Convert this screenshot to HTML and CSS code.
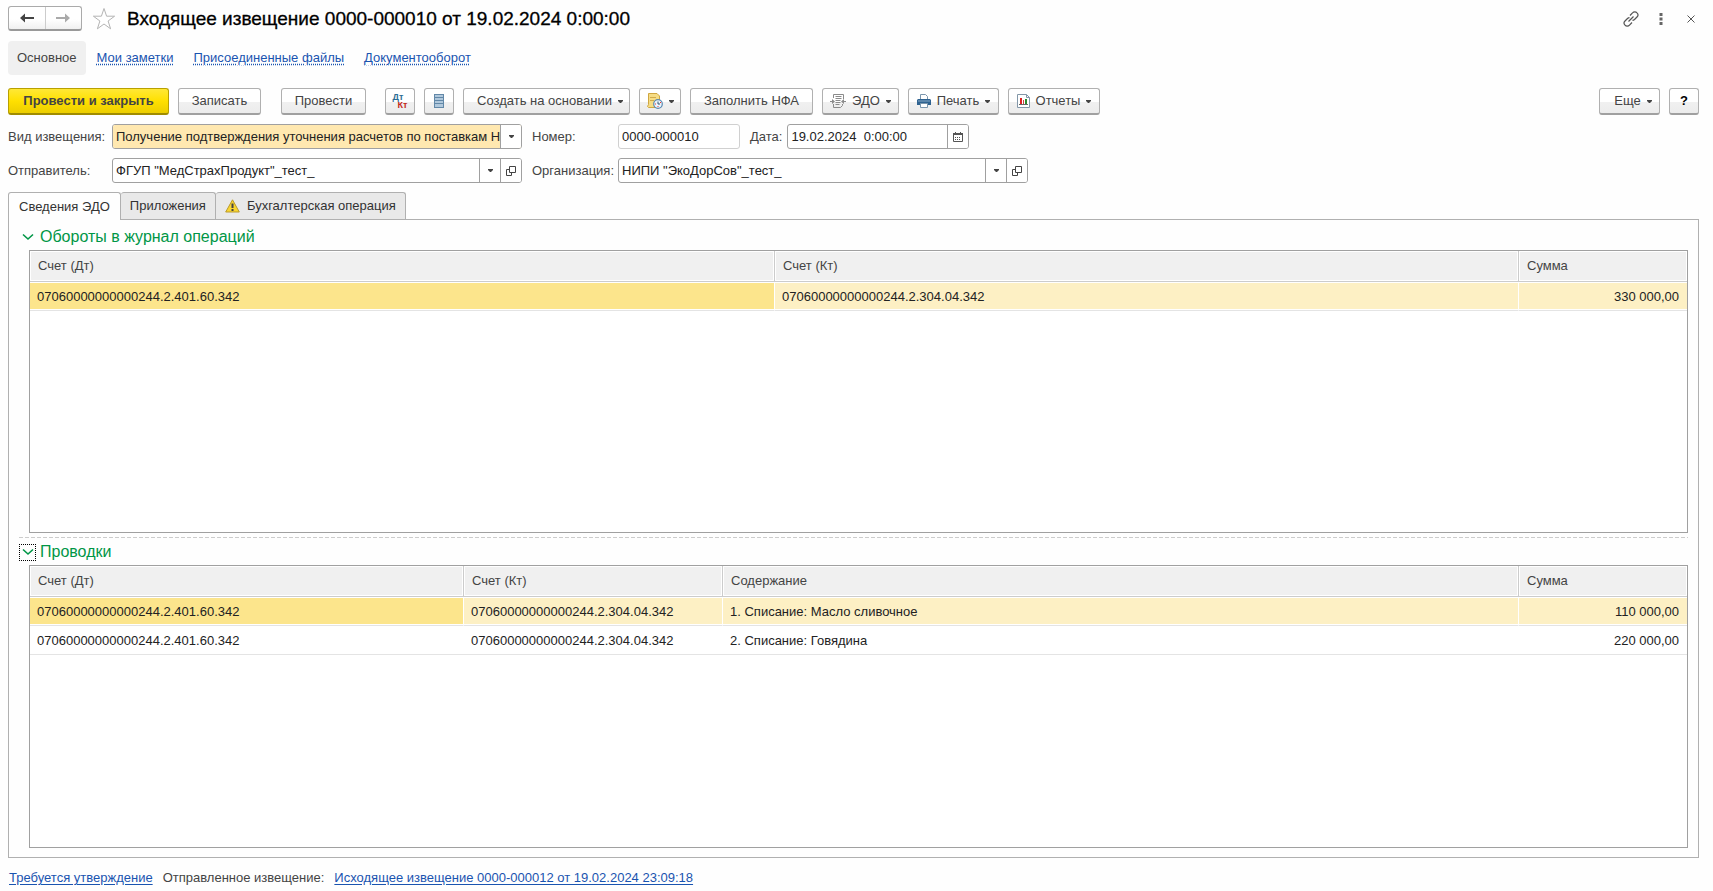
FILE: index.html
```html
<!DOCTYPE html>
<html lang="ru">
<head>
<meta charset="utf-8">
<title>Входящее извещение 0000-000010 от 19.02.2024 0:00:00</title>
<link rel="stylesheet" href="styles.css">
</head>
<body>
<svg class="defs" aria-hidden="true">
  <symbol id="caret" viewBox="0 0 5 3"><path d="M0 0h5v1L3 3H2L0 1z" fill="currentColor"/></symbol>
  <symbol id="open" viewBox="0 0 10 10"><path d="M3.500.5h6v6h-6zM3 3.500H.5v6h5V7" fill="none" stroke="currentColor"/></symbol>
  <symbol id="chevron" viewBox="0 0 12 8"><path d="M1 1.500l5 4.500 5-4.500" fill="none" stroke="currentColor" stroke-width="1.600"/></symbol>
</svg>

<header class="titlebar">
  <div class="history">
    <button class="history-btn" aria-label="Назад"><svg width="14" height="10" viewBox="0 0 14 10"><path d="M0 5l5-4.500V4h9v2H5v3.500z" fill="#444"/></svg></button>
    <button class="history-btn" aria-label="Вперед"><svg width="14" height="10" viewBox="0 0 14 10"><path d="M14 5L9 .5V4H0v2h9v3.500z" fill="#aaa"/></svg></button>
  </div>
  <button class="plain" aria-label="В избранное"><svg width="24" height="24" viewBox="0 0 24 24"><path d="M12 1.500l2.600 7.700h8l-6.500 4.800 2.500 7.800-6.600-4.800-6.600 4.800L7.900 14 1.400 9.200h8z" fill="#fff" stroke="#b4b4b4"/></svg></button>
  <h1 class="title">Входящее извещение 0000-000010 от 19.02.2024 0:00:00</h1>
  <div class="window-actions">
    <button class="plain" aria-label="Ссылка"><svg width="16" height="16" viewBox="0 0 16 16" fill="none" stroke="#555" stroke-width="1.200"><path d="M7 4.500l2.500-2.700a3 3 0 0 1 4.500 0 3 3 0 0 1 0 4.200l-2.500 2.500a3 3 0 0 1-2 .8M9 11.500l-2.500 2.700a3 3 0 0 1-4.500 0 3 3 0 0 1 0-4.200l2.500-2.500a3 3 0 0 1 2-.8M5.500 10.500l5-5"/></svg></button>
    <button class="plain" aria-label="Меню"><svg width="4" height="12" viewBox="0 0 4 12"><path d="M.5 0h3v3h-3zM.5 4.500h3v3h-3zM.5 9h3v3h-3z" fill="#666"/></svg></button>
    <button class="plain" aria-label="Закрыть"><svg width="8" height="8" viewBox="0 0 8 8"><path d="M.5.5l7 7m0-7l-7 7" stroke="#555"/></svg></button>
  </div>
</header>

<nav class="sections">
  <span class="section-current">Основное</span>
  <a class="section-link" href="#">Мои заметки</a>
  <a class="section-link" href="#">Присоединенные файлы</a>
  <a class="section-link" href="#">Документооборот</a>
</nav>

<div class="toolbar">
  <button class="btn btn-primary">Провести и закрыть</button>
  <button class="btn btn-write">Записать</button>
  <button class="btn btn-post">Провести</button>
  <button class="btn btn-icon btn-dtkt" aria-label="Дт Кт"><span class="dtkt"><span class="dt">Дт</span><span class="kt">Кт</span></span></button>
  <button class="btn btn-icon" aria-label="Реестр"><svg width="10" height="14" viewBox="0 0 10 14"><path d="M0 0h10v14H0z" fill="#6288a8"/><path d="M1 1h8v2H1zM1 4h8v2H1zM1 7h8v2H1zM1 10h8v3H1z" fill="#b0c8dc"/></svg></button>
  <button class="btn btn-create">Создать на основании<svg class="caret"><use href="#caret"/></svg></button>
  <button class="btn btn-task" aria-label="Задачи"><svg width="16" height="16" viewBox="0 0 16 16"><path d="M1.500.5H10l2.500 2.500v11.500h-11l-1-1 1-2z" fill="#f5dc85" stroke="#cfa640"/><path d="M3 4.500h6M3 7.500h4" stroke="#d2ab4a"/><circle cx="11" cy="11" r="4.300" fill="#eaf4fb" stroke="#5b88b0" stroke-width="1.200"/><path d="M11 8.500V11h2" fill="none" stroke="#357"/><path d="M8 10.500h1v1H8zM10.500 13h1v1h-1zM13 9h1v1h-1z" fill="#e33"/></svg><svg class="caret"><use href="#caret"/></svg></button>
  <button class="btn btn-fill">Заполнить НФА</button>
  <button class="btn btn-edo"><svg width="16" height="14" viewBox="0 0 16 14"><path d="M3.500 4V.5h10V5M3.500 10v3.500h7l2-2V10M5.500 2.500h6M5.500 4.500h6M5.500 6.500h5M5.500 8.500h5M5.500 10.500h4" fill="none" stroke="#8b8b8b"/><path d="M0 7h2V5l3 2.500L2 10V8H0zM16 7h-2V5l-3 2.500 3 2.500V8h2z" fill="#8b8b8b"/></svg><span>ЭДО</span><svg class="caret"><use href="#caret"/></svg></button>
  <button class="btn btn-print"><svg width="14" height="14" viewBox="0 0 14 14"><path d="M3.500 6V.5h5l2 2V6" fill="#fff" stroke="#7b96ad"/><path d="M1 5h12l1 1v5H0V6z" fill="#2f6391"/><path d="M1 7h12" stroke="#88aac6"/><path d="M3.500 9.500h7v4h-7z" fill="#fff" stroke="#7b96ad"/></svg><span>Печать</span><svg class="caret"><use href="#caret"/></svg></button>
  <button class="btn btn-reports"><svg width="13" height="14" viewBox="0 0 13 14"><path d="M.5.5h9l3 3v10H.5z" fill="#fff" stroke="#8297a8"/><path d="M9.500.5v3h3" fill="none" stroke="#8297a8"/><path d="M3 4h2v6H3z" fill="#d22"/><path d="M6 6h1v4H6z" fill="#c44"/><path d="M8 5h2v5H8z" fill="#2a8a2a"/><path d="M2 10.500h9" stroke="#666"/></svg><span>Отчеты</span><svg class="caret"><use href="#caret"/></svg></button>
  <button class="btn btn-more">Еще<svg class="caret"><use href="#caret"/></svg></button>
  <button class="btn btn-icon btn-help">?</button>
</div>

<form class="form">
  <label class="label" for="kind">Вид извещения:</label>
  <div class="field field-required">
    <select class="control" id="kind"><option>Получение подтверждения уточнения расчетов по поставкам Н</option></select>
    <span class="drop"><svg class="caret"><use href="#caret"/></svg></span>
  </div>
  <label class="label" for="number">Номер:</label>
  <div class="row">
    <div class="field field-number"><input class="control" id="number" value="0000-000010" readonly></div>
    <label class="label" for="date">Дата:</label>
    <div class="field field-date">
      <input class="control" id="date" value="19.02.2024  0:00:00">
      <button type="button" class="field-btn" aria-label="Календарь"><svg width="10" height="10" viewBox="0 0 10 10"><path d="M.5 2.500h9v7h-9z" fill="#fff" stroke="#555"/><path d="M0 1h10v2H0zM2 0h1v1H2zM7 0h1v1H7z" fill="#555"/><path d="M2 5.500h6M2 7.500h6" stroke="#555" stroke-dasharray="1 1"/></svg></button>
    </div>
  </div>
  <label class="label" for="sender">Отправитель:</label>
  <div class="field">
    <select class="control" id="sender"><option>ФГУП "МедСтрахПродукт"_тест_</option></select>
    <span class="drop drop-inner"><svg class="caret"><use href="#caret"/></svg></span>
    <button type="button" class="field-btn" aria-label="Открыть отправителя"><svg width="10" height="10"><use href="#open"/></svg></button>
  </div>
  <label class="label" for="org">Организация:</label>
  <div class="field">
    <select class="control" id="org"><option>НИПИ "ЭкоДорСов"_тест_</option></select>
    <span class="drop drop-inner"><svg class="caret"><use href="#caret"/></svg></span>
    <button type="button" class="field-btn" aria-label="Открыть организацию"><svg width="10" height="10"><use href="#open"/></svg></button>
  </div>
</form>

<div class="tabs" role="tablist">
  <button class="tab tab-active" role="tab" aria-selected="true">Сведения ЭДО</button>
  <button class="tab" role="tab" aria-selected="false">Приложения</button>
  <button class="tab" role="tab" aria-selected="false"><svg width="15" height="14" viewBox="0 0 15 14"><path d="M7.500.8L14.300 13H.7z" fill="#f9d531" stroke="#b99a2c" stroke-linejoin="round"/><path d="M6.500 4.500h2V9h-2zM6.500 10h2v2h-2z" fill="#444"/></svg>Бухгалтерская операция</button>
</div>

<main class="panel">
  <section class="group">
    <h2 class="group-title"><button class="toggle" aria-label="Свернуть"><svg width="12" height="8"><use href="#chevron"/></svg></button>Обороты в журнал операций</h2>
    <div class="grid">
      <table class="table">
        <colgroup><col class="col-half"><col><col class="col-sum"></colgroup>
        <thead><tr><th>Счет (Дт)</th><th>Счет (Кт)</th><th>Сумма</th></tr></thead>
        <tbody>
          <tr class="selected"><td class="active">07060000000000244.2.401.60.342</td><td>07060000000000244.2.304.04.342</td><td class="num">330 000,00</td></tr>
        </tbody>
      </table>
    </div>
  </section>
  <div class="splitter"></div>
  <section class="group">
    <h2 class="group-title"><button class="toggle toggle-focused" aria-label="Свернуть"><svg width="12" height="8"><use href="#chevron"/></svg></button>Проводки</h2>
    <div class="grid">
      <table class="table">
        <colgroup><col class="col-debit"><col class="col-credit"><col><col class="col-sum"></colgroup>
        <thead><tr><th>Счет (Дт)</th><th>Счет (Кт)</th><th>Содержание</th><th>Сумма</th></tr></thead>
        <tbody>
          <tr class="selected"><td class="active">07060000000000244.2.401.60.342</td><td>07060000000000244.2.304.04.342</td><td>1. Списание: Масло сливочное</td><td class="num">110 000,00</td></tr>
          <tr><td>07060000000000244.2.401.60.342</td><td>07060000000000244.2.304.04.342</td><td>2. Списание: Говядина</td><td class="num">220 000,00</td></tr>
        </tbody>
      </table>
    </div>
  </section>
</main>

<footer class="footer">
  <a href="#">Требуется утверждение</a>
  <span>Отправленное извещение:</span>
  <a href="#">Исходящее извещение 0000-000012 от 19.02.2024 23:09:18</a>
</footer>
</body>
</html>
```
FILE: styles.css
```css
* { box-sizing: border-box; }

body {
  margin: 0;
  height: 100vh;
  min-height: 600px;
  padding: 6px 14px 0 8px;
  display: flex;
  flex-direction: column;
  background: #fefefe;
  color: #444;
  font: 13px/16px "Liberation Sans", Arial, sans-serif;
}

button, input, select { font: inherit; color: inherit; margin: 0; }
svg { flex: none; }
.defs { position: absolute; width: 0; height: 0; }
.caret { width: 5px; height: 3px; color: #444; }

.plain { padding: 0; border: 0; background: none; display: flex; justify-content: center; }

/* Title bar */
.titlebar { display: flex; align-items: center; height: 25px; }
.history {
  display: flex;
  width: 74px;
  height: 25px;
  margin-right: 10px;
  border: 1px solid #aaa;
  border-bottom: 2px solid #999;
  border-radius: 3px;
  background: linear-gradient(#fff 55%, #f0f0f0);
}
.history-btn {
  flex: 1;
  display: flex;
  align-items: center;
  justify-content: center;
  padding: 0;
  border: 0;
  background: none;
}
.history-btn + .history-btn { border-left: 1px solid #ccc; }
.title { margin: 0 0 0 11px; font-size: 19px; font-weight: 400; line-height: 22px; color: #000; -webkit-text-stroke: 0.3px #000; }
.window-actions { display: flex; align-items: center; gap: 14px; margin-left: auto; }
.window-actions .plain { width: 16px; }

/* Section links */
.sections { display: flex; align-items: center; gap: 20px; margin-top: 10px; height: 34px; }
.section-current { padding: 9px; margin-right: -9px; border-radius: 4px; background: #f0f0f0; }
.section-link {
  color: #1a54b0;
  text-decoration: underline dotted;
  text-underline-offset: 2px;
}

/* Command bar */
.toolbar { display: flex; gap: 9px; margin-top: 13px; }
.btn {
  display: flex;
  align-items: center;
  justify-content: center;
  gap: 6px;
  height: 27px;
  padding: 0;
  border: 1px solid #b0b0b0;
  border-bottom: 2px solid #a0a0a0;
  border-radius: 3px;
  background: linear-gradient(#fff 55%, #f0f0f0 56%, #ececec);
  white-space: nowrap;
}
.btn-primary {
  width: 161px;
  border-color: #b8a000 #b8a000 #a08c00;
  background: linear-gradient(#ffe836, #ffe000 50%, #ecce00);
  font-weight: 700;
}
.btn-icon { width: 30px; }
.btn-write { width: 83px; }
.btn-post { width: 85px; margin-left: 11px; }
.btn-dtkt { margin-left: 10px; }
.btn-create { width: 167px; padding-left: 7px; }
.btn-task { width: 42px; }
.btn-fill { width: 123px; }
.btn-edo { width: 77px; }
.btn-print { width: 91px; }
.btn-reports { width: 92px; }
.btn-more { width: 61px; margin-left: auto; padding-left: 7px; }
.btn-help { color: #000; font-weight: 700; }
.dtkt { display: grid; width: 15px; font-size: 9px; line-height: 8px; font-weight: 700; }
.dt { color: #2c6c94; text-align: left; }
.kt { color: #c4281c; text-align: right; }

/* Header form */
.form {
  display: grid;
  grid-template-columns: 104px 410px 96px 410px;
  row-gap: 9px;
  align-items: center;
  margin-top: 9px;
}
.form > .label:nth-of-type(2n) { padding-left: 10px; }
.label { white-space: nowrap; }
.row { display: flex; align-items: center; gap: 10px; }
.row .label { margin-right: -5px; }
.field {
  position: relative;
  display: flex;
  height: 25px;
  border: 1px solid #a0a0a0;
  border-radius: 3px;
  background: #fff;
  color: #222;
  overflow: hidden;
}
.control {
  flex: 1;
  min-width: 0;
  padding: 0 0 0 3px;
  border: 0;
  background: none;
  appearance: none;
  outline: 0;
  white-space: pre;
}
select.control { padding-right: 21px; }
.field-required .control { background: #ffe8b0; }
.field-number { width: 122px; border-color: #d0d0d0; }
.field-date { width: 182px; }
.drop, .field-btn {
  display: flex;
  align-items: center;
  justify-content: center;
  width: 21px;
  padding: 0;
  border: 0;
  border-left: 1px solid #a0a0a0;
  background: #fff;
  color: #444;
}
.drop { position: absolute; top: 0; right: 0; height: 100%; pointer-events: none; }
.drop-inner { right: 21px; }

/* Tabs */
.tabs { display: flex; margin-top: 9px; }
.tab {
  display: flex;
  align-items: center;
  gap: 7px;
  height: 27px;
  padding: 0 9px;
  border: 1px solid #b0b0b0;
  border-bottom: 0;
  border-radius: 3px 3px 0 0;
  background: #e9e9e9;
  color: #333;
}
.tab + .tab { border-left: 0; }
.tab-active { position: relative; height: 28px; margin-bottom: -1px; padding: 0 10px; background: #fefefe; }

.panel {
  flex: 1;
  display: flex;
  flex-direction: column;
  padding: 6px 10px 9px 10px;
  border: 1px solid #b0b0b0;
}
.group { flex: 1; display: flex; flex-direction: column; }
.group-title {
  display: flex;
  align-items: center;
  gap: 4px;
  margin: 0;
  height: 24px;
  padding-bottom: 2px;
  color: #009646;
  font-size: 16px;
  font-weight: 400;
  line-height: 20px;
}
.toggle {
  display: flex;
  align-items: center;
  justify-content: center;
  width: 17px;
  height: 17px;
  padding: 0;
  border: 0;
  background: none;
}
.toggle-focused { border: 1px dotted #000; }
.splitter {
  height: 1px;
  margin: 4px 0 3px;
  background: repeating-linear-gradient(90deg, #ccc 0 4px, transparent 4px 6px);
}
.grid { flex: 1; margin-left: 10px; border: 1px solid #a0a0a0; background: #fff; }

.table { width: 100%; table-layout: fixed; border-collapse: separate; border-spacing: 0; }
.col-half { width: 745px; }
.col-debit { width: 434px; }
.col-credit { width: 259px; }
.col-sum { width: 168px; }
.table th {
  height: 31px;
  padding: 0 8px;
  border-right: 1px solid #ccc;
  border-bottom: 1px solid #ccc;
  background: #f0f0f0;
  box-shadow: inset 0 0 0 1px #fff;
  font-weight: 400;
  text-align: left;
}
.table th:last-child { border-right: 0; }
.table td {
  height: 29px;
  padding: 0 7px;
  border-top: 1px solid #fff;
  border-bottom: 1px solid #e4e4e4;
  color: #222;
}
.table .num { text-align: right; padding-right: 8px; }
.selected td { background: #fdf0c4; box-shadow: inset 0 -1px #fff; border-right: 1px solid #fff; }
.selected td:last-child { border-right: 0; }
.selected .active { background: #fce58c; }

.footer { display: flex; gap: 10px; align-items: center; height: 26px; margin-top: 7px; padding-left: 1px; }
.footer a { color: #1a54b0; text-underline-offset: 2px; }
```
